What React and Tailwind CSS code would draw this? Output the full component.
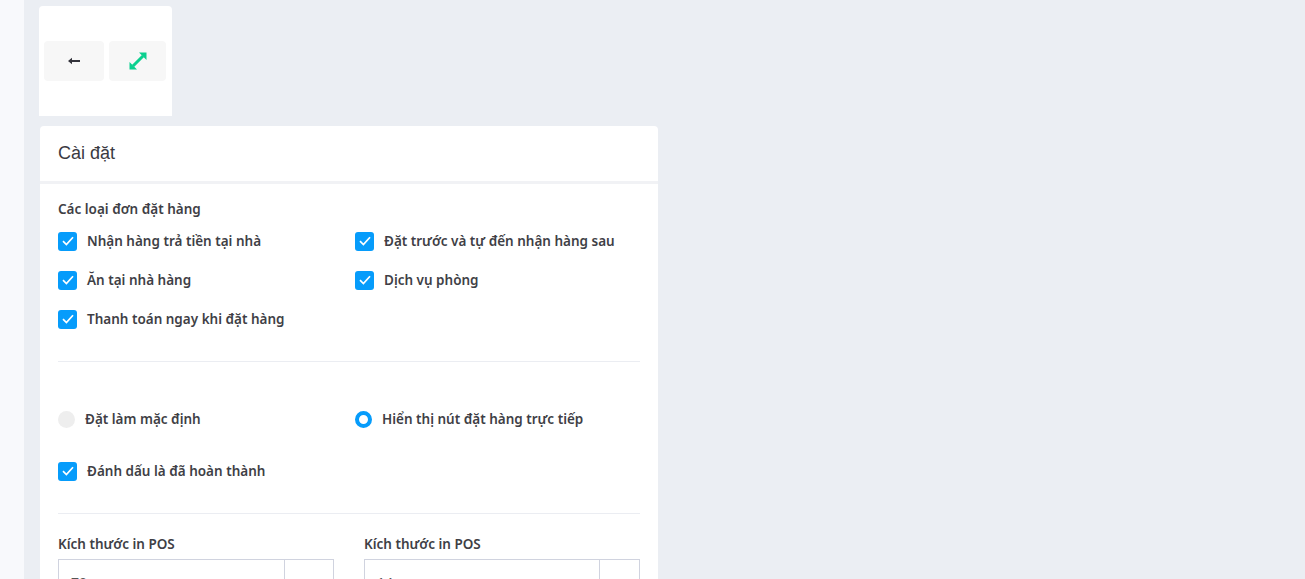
import React from "react";

const labelCls = "text-[13.5px] leading-5 font-semibold text-[#3f3f46] whitespace-nowrap";

function Check({ label, className = "" }) {
  return (
    <div className={"flex items-center h-5 " + className}>
      <span className="w-[19px] h-[19px] rounded-[3px] bg-[#069cfb] flex items-center justify-center shrink-0">
        <svg width="12" height="10" viewBox="0 0 12 10" fill="none">
          <path d="M1 5.2 L4.4 8.6 L11 1.2" stroke="white" strokeWidth="1.7" />
        </svg>
      </span>
      <span className={labelCls + " ml-[10px]"}>{label}</span>
    </div>
  );
}

function PosField({ value, className, addon }) {
  return (
    <div className={className}>
      <div className={labelCls + " h-5 mb-[5px]"}>Kích thước in POS</div>
      <div className="flex h-[44px] border border-[#d0d3df]">
        <div className="flex-1 pl-3 pt-[13px] text-[14px] leading-5 text-[#555]">{value}</div>
        <div className={addon + " border-l border-[#d0d3df]"} />
      </div>
    </div>
  );
}

export default function App() {
  return (
    <div className="h-[579px] overflow-hidden flex bg-[#ebeef3] font-['Noto_Sans','Open_Sans',sans-serif]">
      <div className="w-6 shrink-0 bg-[#f8f9fc]" />
      <div className="pl-[15px] pt-[6px]">
        <div className="w-[133px] h-[110px] bg-white rounded-t-[4px] flex items-center gap-[5px] pl-[5px]">
          <div className="w-[60px] h-10 rounded-[4px] bg-[#f7f7f7] flex items-center justify-center">
            <svg width="12" height="8" viewBox="0 0 12 8" fill="none">
              <path d="M0 4 L4 0.8 V3 H12 V5 H4 V7.2 Z" fill="#33333b" />
            </svg>
          </div>
          <div className="w-[57px] h-10 rounded-[4px] bg-[#f7f7f7] flex items-center justify-center">
            <svg width="18" height="18" viewBox="0 0 18 18" fill="none">
              <path d="M4 14 L14 4" stroke="#0bd08f" strokeWidth="3" />
              <path d="M10 0.5 H17.5 V8 Z" fill="#0bd08f" />
              <path d="M0.5 10 V17.5 H8 Z" fill="#0bd08f" />
            </svg>
          </div>
        </div>
        <div className="ml-px mt-[10px] w-[618px] bg-white rounded-t-[4px]">
          <div className="h-[58px] px-[18px] flex items-center border-b-[3px] border-[#f1f2f5] font-['Liberation_Sans',sans-serif] text-[18px] text-[#3a3a42]">
            Cài đặt
          </div>
          <div className="px-[18px] pt-[15px]">
            <div className={labelCls}>Các loại đơn đặt hàng</div>
            <div className="mt-[12px] grid grid-cols-[297px_1fr] gap-y-[19px]">
              <Check label="Nhận hàng trả tiền tại nhà" />
              <Check label="Đặt trước và tự đến nhận hàng sau" />
              <Check label="Ăn tại nhà hàng" />
              <Check label="Dịch vụ phòng" />
              <Check label="Thanh toán ngay khi đặt hàng" />
            </div>
            <div className="mt-[32px] border-t border-[#ebedf2]" />
            <div className="mt-[47px] grid grid-cols-[297px_1fr]">
              <div className="flex items-center h-5">
                <span className="w-[17px] h-[17px] rounded-full bg-[#eeeeee]" />
                <span className={labelCls + " ml-[10px]"}>Đặt làm mặc định</span>
              </div>
              <div className="flex items-center h-5">
                <span className="w-[17px] h-[17px] rounded-full border-4 border-[#069cfb] bg-white" />
                <span className={labelCls + " ml-[10px]"}>Hiển thị nút đặt hàng trực tiếp</span>
              </div>
            </div>
            <Check label="Đánh dấu là đã hoàn thành" className="mt-[32px]" />
            <div className="mt-[32px] border-t border-[#ebedf2]" />
            <div className="mt-[20px] flex">
              <PosField value="70" className="w-[276px]" addon="w-[49px]" />
              <PosField value="14" className="ml-[30px] w-[276px]" addon="w-[40px]" />
            </div>
          </div>
        </div>
      </div>
    </div>
  );
}
